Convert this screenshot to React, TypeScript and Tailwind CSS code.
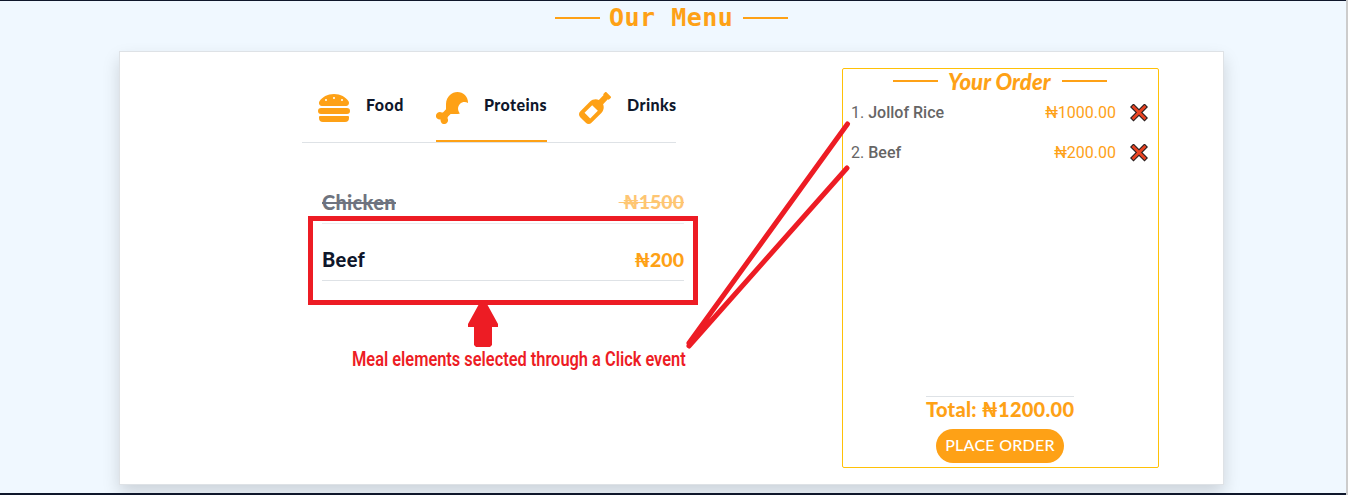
import React from "react";
import { FaHamburger, FaDrumstickBite, FaWineBottle } from "react-icons/fa";

const tabs = [
  { label: "Food", Icon: FaHamburger, width: "w-[86px]", tracking: "tracking-[0.45px]", active: false },
  { label: "Proteins", Icon: FaDrumstickBite, width: "w-[111px]", tracking: "tracking-[0.4px]", active: true },
  { label: "Drinks", Icon: FaWineBottle, width: "w-[97px]", tracking: "tracking-[0.4px]", active: false },
];

const orders = [
  { name: "Jollof Rice", price: "₦1000.00" },
  { name: "Beef", price: "₦200.00" },
];

function Cross() {
  return (
    <svg className="size-[18px]" viewBox="0 0 18 18">
      <path d="M3.5 3L14.5 14M14.5 3L3.5 14" stroke="#2b2020" strokeWidth="5" strokeLinecap="square" />
      <path d="M3.5 3L14.5 14M14.5 3L3.5 14" stroke="#ea4322" strokeWidth="2.7" strokeLinecap="square" />
    </svg>
  );
}

function Rule() {
  return <span className="h-0.5 w-[45px] shrink-0 bg-[#fea116]" />;
}

function Annotations() {
  return (
    <>
      <div className="absolute left-[308px] top-[216px] h-[89px] w-[390px] border-5 border-[#ed1c24]" />
      <svg className="absolute left-0 top-0" width="1348" height="495" viewBox="0 0 1348 495">
        <path d="M479 304H487L498 324V327H492V345L490 347H476L474 345V327H468V324Z" fill="#ed1c24" />
        <path d="M689 343L847.5 124M689 346L847 168" stroke="#ed1c24" strokeWidth="5" strokeLinecap="round" />
      </svg>
      <div className="absolute left-[352px] top-[347px] origin-left scale-x-[0.819] whitespace-nowrap font-[Roboto] text-[20px] font-semibold leading-6 text-[#ed1c24]">
        Meal elements selected through a Click event
      </div>
    </>
  );
}

export default function App() {
  return (
    <div className="relative flex h-[495px] w-[1348px] flex-col overflow-hidden border-r-2 border-r-[#cccccc] bg-[#f0f8ff] font-[Lato,sans-serif] text-[#0f172b]">
      <div className="h-px shrink-0 bg-[#0f172b]" />
      <header className="flex h-[50px] shrink-0 items-start justify-center pr-[3px] text-[#fea116]">
        <div className="flex h-[34px] items-center gap-[10px]">
          <Rule />
          <h1 className="-ml-px w-[124px] whitespace-nowrap font-['DejaVu_Sans_Mono',monospace] text-[25px] font-bold tracking-[0.5px]">Our Menu</h1>
          <Rule />
        </div>
      </header>

      <main className="ml-[119px] flex h-[434px] w-[1105px] shrink-0 border border-[#dee2e6] bg-white shadow-[0_8px_16px_rgba(0,0,0,0.15)]">
        <section className="ml-[182px] w-[382px] shrink-0">
          <nav className="flex h-[91px] w-[374px] gap-8 border-b border-[#dee2e6] pl-4 pt-10">
            {tabs.map(({ label, Icon, width, tracking, active }) => (
              <div key={label} className={`flex h-[50px] shrink-0 items-start gap-4 ${width} ${active ? "border-b-2 border-[#fea116]" : ""}`}>
                <Icon size={32} className="shrink-0 text-[#fea116]" />
                <span className={`pt-px text-base font-black leading-6 ${tracking}`}>{label}</span>
              </div>
            ))}
          </nav>
          <div className="ml-5 mt-[34px] w-[362px] text-[20px] font-black">
            <div className="flex h-[47px] items-center justify-between border-b border-[#dee2e6] pt-[3px] opacity-60">
              <span className="tracking-[0.3px] line-through">Chicken</span>
              <span className="whitespace-pre text-[19.5px] text-[#fea116] line-through"> ₦1500</span>
            </div>
            <div className="flex h-[57px] items-end justify-between border-b border-[#dee2e6] pb-[6px]">
              <span className="tracking-[0.4px]">Beef</span>
              <span className="text-[19.5px] text-[#fea116]">₦200</span>
            </div>
          </div>
        </section>

        <aside className="ml-[158px] mt-4 flex h-[400px] w-[317px] shrink-0 flex-col rounded-xs border border-[#ffc107]">
          <div className="flex h-6 items-center justify-center gap-[10px] pr-px text-[#fea116]">
            <Rule />
            <h2 className="w-[104px] whitespace-nowrap text-[22px] font-black italic tracking-[0.1px]">Your Order</h2>
            <Rule />
          </div>
          <ol className="font-[Roboto] text-base text-[#666565]">
            {orders.map((order, i) => (
              <li key={order.name} className="flex h-10 items-center pl-2 pr-[10px]">
                <span className="mr-1">{i + 1}.</span>
                <span className="font-medium">{order.name}</span>
                <span className="ml-auto mr-[14px] text-[#fea116]">{order.price}</span>
                <Cross />
              </li>
            ))}
          </ol>
          <div className="mb-1 mt-auto flex flex-col items-center pr-px">
            <div className="h-[33px] w-[148px] whitespace-nowrap border-t border-[#dee2e6] text-[20px] font-black leading-6 tracking-[0.27px] text-[#fea116]">Total: ₦1200.00</div>
            <button className="h-[34px] w-32 whitespace-nowrap rounded-full bg-[#fea116] pb-0.5 text-base font-medium tracking-[0.25px] text-white">PLACE ORDER</button>
          </div>
        </aside>
      </main>
      <div className="mt-auto h-0.5 shrink-0 bg-[#0f172b]" />
      <Annotations />
    </div>
  );
}
